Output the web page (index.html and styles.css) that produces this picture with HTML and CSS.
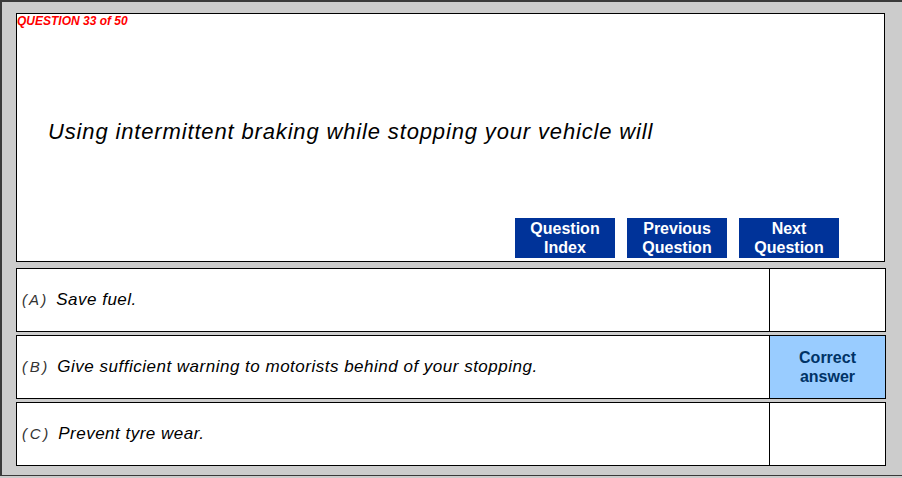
FILE: index.html
```html
<!DOCTYPE html>
<html>
<head>
<meta charset="utf-8">
<link rel="stylesheet" href="styles.css">
</head>
<body>
<div class="frame">
  <div class="qbox">
    <div class="qnum">QUESTION 33 of 50</div>
    <div class="qtext">Using intermittent braking while stopping your vehicle will</div>
    <div class="nav">
      <a class="btn">Question<br>Index</a>
      <a class="btn">Previous<br>Question</a>
      <a class="btn">Next<br>Question</a>
    </div>
  </div>
  <div class="answers">
    <div class="row">
      <div class="atext"><span class="line"><span class="letter">( A )</span>Save fuel.</span></div>
      <div class="mark"></div>
    </div>
    <div class="row">
      <div class="atext"><span class="line"><span class="letter">( B )</span>Give sufficient warning to motorists behind of your stopping.</span></div>
      <div class="mark correct">Correct<br>answer</div>
    </div>
    <div class="row">
      <div class="atext"><span class="line"><span class="letter">( C )</span>Prevent tyre wear.</span></div>
      <div class="mark"></div>
    </div>
  </div>
</div>
</body>
</html>
```
FILE: styles.css
```css
html, body {
  margin: 0;
  padding: 0;
  background: #cccccc;
}
.frame {
  width: 902px;
  height: 476px;
  box-sizing: border-box;
  background: #cccccc;
  border-top: 2px solid #3a3a3a;
  border-left: 2px solid #3a3a3a;
  border-bottom: 1px solid #3a3a3a;
  padding: 11px 0 0 14px;
  font-family: "Liberation Sans", Arial, sans-serif;
  display: flex;
  flex-direction: column;
}
.qbox {
  width: 869px;
  height: 249px;
  box-sizing: border-box;
  border: 1px solid #000;
  background: #fff;
  display: flex;
  flex-direction: column;
}
.qnum {
  color: #ff0000;
  font-weight: bold;
  font-style: italic;
  font-size: 12px;
  line-height: 14px;
  padding: 0;
}
.qtext {
  font-style: italic;
  font-size: 22px;
  line-height: 24px;
  letter-spacing: 0.85px;
  color: #000;
  padding: 92px 0 0 31px;
}
.nav {
  margin-top: auto;
  display: flex;
  justify-content: flex-end;
  gap: 12px;
  padding: 0 45px 3px 0;
}
.btn {
  width: 100px;
  height: 40px;
  background: #003399;
  color: #fff;
  font-weight: bold;
  font-size: 16px;
  line-height: 19px;
  text-align: center;
  display: flex;
  align-items: center;
  justify-content: center;
}
.answers {
  margin-top: 6px;
  display: flex;
  flex-direction: column;
  gap: 3px;
  width: 870px;
}
.row {
  height: 64px;
  box-sizing: border-box;
  border: 1px solid #000;
  background: #fff;
  display: grid;
  grid-template-columns: 752px 1fr;
}
.atext {
  display: flex;
  align-items: center;
  padding-left: 5px;
  font-style: italic;
  font-size: 17px;
  letter-spacing: 0.5px;
  color: #000;
}
.line {
  line-height: 20px;
}
.letter {
  color: #333;
  font-size: 15px;
  letter-spacing: 0;
  word-spacing: -1.5px;
  margin-right: 10px;
  white-space: pre;
}
.mark {
  border-left: 1px solid #000;
}
.correct {
  background: #99ccff;
  color: #003366;
  font-weight: bold;
  font-size: 16px;
  font-style: normal;
  line-height: 19px;
  text-align: center;
  display: flex;
  align-items: center;
  justify-content: center;
}
```
